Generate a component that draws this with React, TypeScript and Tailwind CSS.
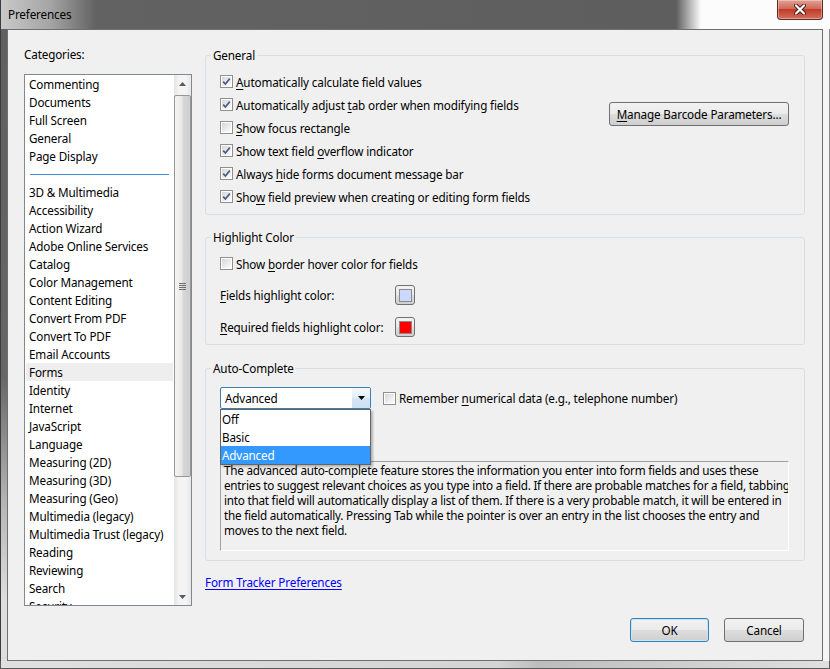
import type { ReactNode } from "react";

const categories = [
  "Commenting",
  "Documents",
  "Full Screen",
  "General",
  "Page Display",
  "-",
  "3D & Multimedia",
  "Accessibility",
  "Action Wizard",
  "Adobe Online Services",
  "Catalog",
  "Color Management",
  "Content Editing",
  "Convert From PDF",
  "Convert To PDF",
  "Email Accounts",
  "Forms",
  "Identity",
  "Internet",
  "JavaScript",
  "Language",
  "Measuring (2D)",
  "Measuring (3D)",
  "Measuring (Geo)",
  "Multimedia (legacy)",
  "Multimedia Trust (legacy)",
  "Reading",
  "Reviewing",
  "Search",
  "Security",
];

const Check = ({ checked }: { checked?: boolean }) => (
  <span className="flex h-[13px] w-[13px] shrink-0 items-center justify-center border border-[#8f8f8f] bg-white p-[1px]">
    <span className="flex h-full w-full items-center justify-center bg-[linear-gradient(135deg,#d6d6d6,#f2f2f2_70%,#fbfbfb)]">
      {checked && (
        <svg width="9" height="9" viewBox="0 0 9 9">
          <path d="M1.2 4.6 L3.4 7 L7.8 1.6" fill="none" stroke="#4a5d86" strokeWidth="1.7" />
        </svg>
      )}
    </span>
  </span>
);

const U = ({ children }: { children: ReactNode }) => <span className="underline underline-offset-[2px]">{children}</span>;

const Row = ({ checked, children }: { checked?: boolean; children: ReactNode }) => (
  <div className="flex h-[23px] items-center gap-[3px] whitespace-nowrap">
    <Check checked={checked} />
    <span className="leading-[16px]">{children}</span>
  </div>
);

const Group = ({ title, className, children }: { title: string; className?: string; children: ReactNode }) => (
  <div className={`relative rounded-[3px] border border-[#d5dfe5] ${className ?? ""}`}>
    <span className="absolute -top-[9px] left-[5px] bg-[#f0f0f0] px-[2px] leading-[16px]">{title}</span>
    {children}
  </div>
);

const btn =
  "flex h-[24px] items-center justify-center rounded-[3px] border bg-[linear-gradient(#f2f2f2,#ebebeb_48%,#dddddd_52%,#cfcfcf)] leading-[16px]";

const Swatch = ({ color }: { color: string }) => (
  <div className="flex h-[20px] w-[20px] items-center justify-center rounded-[3px] border border-[#707070] bg-[linear-gradient(#f2f2f2,#ebebeb_48%,#dddddd_52%,#cfcfcf)]">
    <div className={`h-[13px] w-[13px] border border-[#8a8a8a] ${color}`} />
  </div>
);

export default function App() {
  return (
    <div className="flex h-[669px] w-[830px] flex-col overflow-hidden bg-[#f4f4f4] font-['Segoe_UI','Noto_Sans',sans-serif] text-[11.7px] tracking-[-0.15px] text-black">
      {/* title bar */}
      <div className="flex h-[29px] shrink-0 items-start border-l border-[#3c3c3c] bg-[linear-gradient(to_right,#c9c9c9,#a4a4a4_50px,#626262_95px,#5e5e5e_675px,#fcfcfc_700px)]">
        <span className="ml-[7px] mt-[6px] leading-[16px]">Preferences</span>
        <div className="ml-auto mr-[7px] flex h-[20px] w-[46px] items-center justify-center rounded-b-[4px] border border-t-0 border-[#5e2a22] bg-[linear-gradient(#e3a193,#d06b5a_45%,#c23a28_50%,#d0705c)] shadow-[inset_0_0_0_1px_rgba(255,255,255,0.35)]">
          <svg width="12" height="11" viewBox="0 0 12 11">
            <path d="M2 1.5 L10 9.5 M10 1.5 L2 9.5" stroke="#4a1a14" strokeWidth="4" strokeLinecap="round" />
            <path d="M2 1.5 L10 9.5 M10 1.5 L2 9.5" stroke="#ffffff" strokeWidth="2.2" strokeLinecap="round" />
          </svg>
        </div>
      </div>

      <div className="flex h-[632px] shrink-0">
        <div className="w-[7px] border-l border-[#3c3c3c] bg-[linear-gradient(#5f5f5f,#666666_55%,#b5b5b5_75%,#dddddd_90%)]" />
        <div className="flex w-[816px] border border-[#6f6f6f] bg-[#f0f0f0]">
          {/* left column */}
          <div className="w-[184px] pl-[16px] pt-[16px]">
            <div className="leading-[16px]">Categories:</div>
            <div className="mt-[12px] flex h-[532px] w-[168px] overflow-hidden border border-[#828790] bg-white">
              <div className="flex-1 overflow-hidden">
                {categories.map((c) =>
                  c === "-" ? (
                    <div key="sep" className="flex h-[18px] items-center px-[5px]">
                      <div className="h-[1px] w-full bg-[#3c8ee0]" />
                    </div>
                  ) : (
                    <div
                      key={c}
                      className={`mx-[1px] h-[18px] whitespace-nowrap pl-[3px] leading-[18px] ${c === "Forms" ? "bg-[#eeeeee]" : ""}`}
                    >
                      {c}
                    </div>
                  )
                )}
              </div>
              {/* scrollbar */}
              <div className="flex w-[17px] flex-col bg-[linear-gradient(to_right,#e4e4e4,#f4f4f4_30%,#f4f4f4_70%,#e8e8e8)]">
                <div className="flex h-[17px] items-center justify-center">
                  <svg width="7" height="4" viewBox="0 0 7 4">
                    <path d="M0 4 L3.5 0 L7 4 Z" fill="#5a5a5a" />
                  </svg>
                </div>
                <div className="mt-[3px] flex h-[382px] items-center justify-center rounded-[2px] border border-[#979797] bg-[linear-gradient(to_right,#f4f4f4,#e9e9e9_45%,#d6d6d6_55%,#cfcfcf)]">
                  <div className="flex flex-col gap-[1px]">
                    <div className="h-[1px] w-[7px] bg-[#6f6f6f]" />
                    <div className="h-[1px] w-[7px] bg-[#6f6f6f]" />
                    <div className="h-[1px] w-[7px] bg-[#6f6f6f]" />
                    <div className="h-[1px] w-[7px] bg-[#6f6f6f]" />
                  </div>
                </div>
                <div className="flex-1" />
                <div className="flex h-[17px] items-center justify-center">
                  <svg width="7" height="4" viewBox="0 0 7 4">
                    <path d="M0 0 L3.5 4 L7 0 Z" fill="#5a5a5a" />
                  </svg>
                </div>
              </div>
            </div>
          </div>

          {/* right column */}
          <div className="ml-[13px] flex w-[600px] flex-col pt-[25px]">
            <Group title="General" className="pb-[6px] pl-[14px] pr-[15px] pt-[14px]">
              <div className="flex justify-between">
                <div>
                  <Row checked>
                    <U>A</U>utomatically calculate field values
                  </Row>
                  <Row checked>
                    Automatically adjust <U>t</U>ab order when modifying fields
                  </Row>
                  <Row>
                    <U>S</U>how focus rectangle
                  </Row>
                  <Row checked>
                    Show text field <U>o</U>verflow indicator
                  </Row>
                  <Row checked>
                    Always <U>h</U>ide forms document message bar
                  </Row>
                  <Row checked>
                    Sho<U>w</U> field preview when creating or editing form fields
                  </Row>
                </div>
                <div className="pt-[32px]">
                  <div className={`${btn} w-[180px] border-[#707070]`}>
                    <span>
                      <U>M</U>anage Barcode Parameters...
                    </span>
                  </div>
                </div>
              </div>
            </Group>

            <Group title="Highlight Color" className="mt-[22px] pb-[7px] pl-[14px] pt-[14px]">
              <Row>
                Show <U>b</U>order hover color for fields
              </Row>
              <div className="mt-[10px] flex h-[20px] items-center">
                <span className="w-[175px] leading-[16px]">
                  <U>F</U>ields highlight color:
                </span>
                <Swatch color="bg-[#ccd8ff]" />
              </div>
              <div className="mt-[12px] flex h-[20px] items-center">
                <span className="w-[175px] leading-[16px]">
                  <U>R</U>equired fields highlight color:
                </span>
                <Swatch color="bg-[#ff0000]" />
              </div>
            </Group>

            <Group title="Auto-Complete" className="mt-[23px] pb-[9px] pl-[14px] pr-[15px] pt-[18px]">
              <div className="flex items-center">
                <div className="relative">
                  <div className="flex h-[22px] w-[151px] items-stretch rounded-[2px] border border-[#3c7fb1] bg-white">
                    <span className="flex-1 pl-[4px] leading-[20px]">Advanced</span>
                    <div className="flex w-[18px] items-center justify-center bg-[linear-gradient(#f3f8fd,#e3eef9_50%,#d3e4f5_50%,#cfe2f5)]">
                      <svg width="7" height="4" viewBox="0 0 7 4">
                        <path d="M0 0 L3.5 4 L7 0 Z" fill="#000" />
                      </svg>
                    </div>
                  </div>
                  {/* open dropdown list */}
                  <div className="absolute left-0 top-full z-10 w-[151px] border border-[#646464] bg-white shadow-[2px_2px_2px_rgba(0,0,0,0.25)]">
                    <div className="h-[18px] pl-[1px] leading-[18px]">Off</div>
                    <div className="h-[18px] pl-[1px] leading-[18px]">Basic</div>
                    <div className="h-[18px] bg-[#3399ff] pl-[1px] leading-[18px] text-white">Advanced</div>
                  </div>
                </div>
                <div className="ml-[12px] flex items-center gap-[3px] whitespace-nowrap">
                  <Check />
                  <span className="leading-[16px]">
                    Remember <U>n</U>umerical data (e.g., telephone number)
                  </span>
                </div>
              </div>
              <div className="mt-[52px] h-[90px] w-[569px] overflow-hidden whitespace-nowrap border border-b-white border-l-[#a0a0a0] border-r-white border-t-[#a0a0a0] bg-[#f0f0f0] pl-[3px] pt-[1px] leading-[15px] tracking-[-0.22px]">
                The advanced auto-complete feature stores the information you enter into form fields and uses these
                <br />
                entries to suggest relevant choices as you type into a field. If there are probable matches for a field, tabbing
                <br />
                into that field will automatically display a list of them. If there is a very probable match, it will be entered in
                <br />
                the field automatically. Pressing Tab while the pointer is over an entry in the list chooses the entry and
                <br />
                moves to the next field.
              </div>
            </Group>

            <div className="mt-[13px] leading-[16px]">
              <span className="text-[#0000ff] underline underline-offset-[2px]">Form Tracker Preferences</span>
            </div>

            <div className="mt-[28px] flex justify-end gap-[15px] pr-[1px]">
              <div className={`${btn} w-[79px] border-[#3c7fb1] shadow-[inset_0_0_0_1px_#bfe9fb]`}>OK</div>
              <div className={`${btn} w-[80px] border-[#707070]`}>Cancel</div>
            </div>
          </div>
        </div>
        <div className="w-[7px] border-r border-[#8a8a8a] bg-[#f6f6f6]" />
      </div>
      <div className="h-[8px] shrink-0 border-b border-l border-r border-[#5a5a5a] bg-[linear-gradient(to_right,#e0e0e0,#d4d4d4_60%,#bdbdbd_65%,#e0e0e0)]" />
    </div>
  );
}
